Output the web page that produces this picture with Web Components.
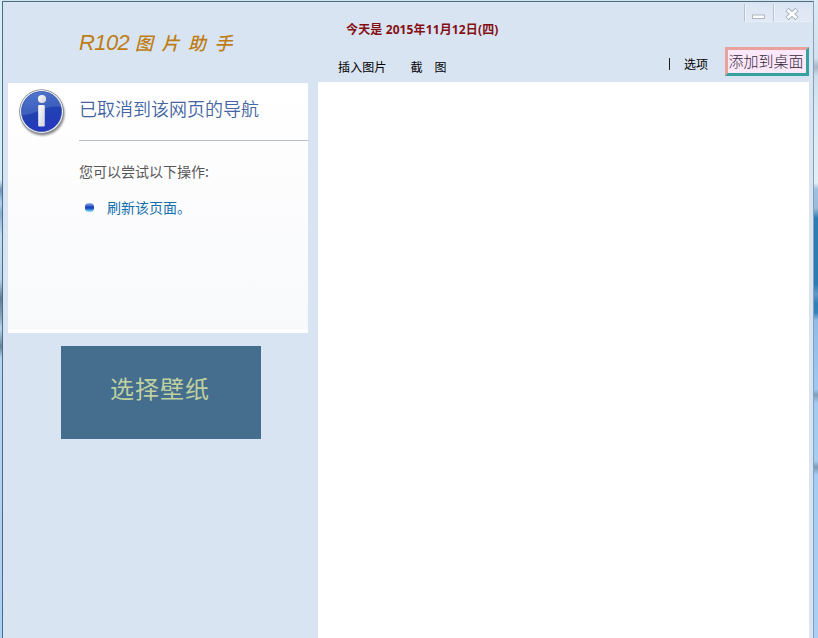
<!DOCTYPE html>
<html lang="zh-CN">
<head>
<meta charset="utf-8">
<title>R102 图片助手</title>
<style>
    html, body { margin: 0; height: 100%; overflow: hidden; }
    body { font-family: "Liberation Sans", "Noto Sans CJK SC", sans-serif; }
</style>
</head>
<body>
<app-window>
    <app-logo slot="side" name="R102">图片助手</app-logo>
    <nav-notice slot="side" heading="已取消到该网页的导航" hint="您可以尝试以下操作:">刷新该页面。</nav-notice>
    <wallpaper-button slot="side">选择壁纸</wallpaper-button>
    <tool-header slot="main"></tool-header>
</app-window>

<script>
const attach = (el, html) => {
    const template = document.createElement('template');
    template.innerHTML = html;
    el.attachShadow({ mode: 'open' }).appendChild(template.content.cloneNode(true));
};

/**
 * 主窗口：桌面边缘、边框、左右两栏
 */
class AppWindow extends HTMLElement {
    constructor() {
        super();
        attach(this, /* html */ `
<style>
    :host {
        display: grid;
        grid-template-columns: 2px 812px 4px;
        width: 818px;
        height: 638px;
        overflow: hidden;
        background: #d3e3ec;
    }
    .edge-left {
        background: linear-gradient(#d9edf5 0, #d5edf7 180px, #6d93bd 190px, #b0d3ef 203px, #87afd1 213px,
            #bfdcf0 235px, #b2d0e8 280px, #5f7d94 298px, #8aa8be 318px, #b7d6ee 328px, #64839b 347px, #b5d5f2 358px, #a9cff3 100%);
    }
    .edge-right {
        background: linear-gradient(#dbeaf3 0, #d1e2ee 58px, #a6b8c6 67px, #cbdfeb 76px, #d8e8f2 110px, #e1eff7 183px,
            #9fc2e2 189px, #9abbd9 208px, #2f7eb3 218px, #2b7cb0 284px, #5c9ac9 294px, #2f7fb7 304px, #3583bb 313px,
            #8ebce7 320px, #9dc9f2 389px, #7f9fba 395px, #a2cbf1 403px, #a4cdf2 461px, #7c9bb6 467px, #a3cdf4 475px, #a9cff4 100%);
    }
    .frame {
        display: grid;
        grid-template-columns: 315px 491px;
        box-sizing: border-box;
        height: 638px;
        margin-top: 1px;
        border: 1px solid #4d6b82;
        border-right-color: #8a9fb7;
        background: #d9e4f3;
    }
    .side { display: flex; flex-direction: column; padding-left: 5px; }
    .main { display: flex; flex-direction: column; }
    .canvas { flex: 1; background: #fff; }
</style>
<div class="edge-left"></div>
<div class="frame">
    <div class="side"><slot name="side"></slot></div>
    <div class="main"><slot name="main"></slot><div class="canvas"></div></div>
</div>
<div class="edge-right"></div>
`);
    }
}
customElements.define('app-window', AppWindow);

// 左上角的手写风格标题
class AppLogo extends HTMLElement {
    constructor() {
        super();
        attach(this, /* html */ `
<style>
    :host {
        display: flex;
        box-sizing: border-box;
        height: 81px;
        padding: 26px 0 0 71px;
        color: #bd7d13;
        line-height: 30px;
        white-space: nowrap;
    }
    .latin {
        width: 56px;
        font: italic 22px/30px "Liberation Sans", sans-serif;
        letter-spacing: -.6px;
    }
    .cn {
        font: italic 500 18px/28px "Noto Sans CJK SC", sans-serif;
        letter-spacing: 8.5px;
    }
</style>
<span class="latin"></span><span class="cn"><slot></slot></span>
`);
        this.shadowRoot.querySelector('.latin').textContent = this.getAttribute('name');
    }
}
customElements.define('app-logo', AppLogo);

// 蓝色信息图标
class InfoIcon extends HTMLElement {
    constructor() {
        super();
        attach(this, /* html */ `
<style>
    :host { display: block; width: 50px; height: 50px; }
    svg { display: block; }
</style>
<svg width="50" height="50" viewBox="0 0 50 50">
    <defs>
        <linearGradient id="ball" x1="0" y1="0" x2="0.3" y2="1">
            <stop offset="0" stop-color="#4068c8"/>
            <stop offset=".5" stop-color="#2145ae"/>
            <stop offset="1" stop-color="#2438bd"/>
        </linearGradient>
        <linearGradient id="stem" x1="0" x2="1" y2="1">
            <stop offset="0" stop-color="#fff"/>
            <stop offset="1" stop-color="#cfd1dc"/>
        </linearGradient>
        <filter id="soft"><feGaussianBlur stdDeviation="1.2"/></filter>
    </defs>
    <circle cx="25.5" cy="26.5" r="22" fill="#555" opacity=".7" filter="url(#soft)"/>
    <circle cx="24.5" cy="24.5" r="22.3" fill="#838995"/>
    <circle cx="24.5" cy="24.5" r="21.5" fill="#f0f2f5"/>
    <circle cx="24.5" cy="24.5" r="20" fill="url(#ball)" stroke="#2845a0" stroke-width=".7"/>
    <path d="M5 26C5 13 14 5 24.5 5S43 12 44 20C29 17 20 28 5 28Z" fill="#8baeea" opacity=".28"/>
    <circle cx="25" cy="12" r="4.1" fill="url(#stem)"/>
    <rect x="21.2" y="18" width="6.6" height="21.4" rx="1" fill="url(#stem)"/>
</svg>
`);
    }
}
customElements.define('info-icon', InfoIcon);

/**
 * 导航取消提示
 */
class NavNotice extends HTMLElement {
    constructor() {
        super();
        attach(this, /* html */ `
<style>
    :host {
        display: grid;
        grid-template-columns: 71px 229px;
        align-content: start;
        width: 300px;
        height: 250px;
        background: linear-gradient(#fff 0, #fdfdfe 80px, #f8f9fb 246px, #fff 247px);
        font-family: "Noto Sans CJK SC", sans-serif;
        white-space: nowrap;
    }
    info-icon { margin: 4px 0 0 9px; }
    h1 {
        box-sizing: border-box;
        height: 58px;
        margin: 0;
        padding-top: 11px;
        border-bottom: 1px solid #b6bbcf;
        color: #4465a2;
        font-size: 18px;
        font-weight: 350;
        line-height: 28px;
    }
    .body { grid-column: 2; padding-top: 19px; font-size: 14px; line-height: 22px; }
    p { margin: 0; color: #575757; }
    .action { display: flex; align-items: center; margin-top: 14px; color: #136ead; }
    .dot {
        width: 9px;
        height: 9px;
        margin: 0 13px 0 6px;
        border-radius: 4px;
        background: linear-gradient(#a6b9ed 0, #3157ca 35%, #1438b8 55%, #49a5e8 80%, #b3dcf2);
    }
</style>
<info-icon></info-icon>
<h1></h1>
<div class="body">
    <p></p>
    <div class="action"><i class="dot"></i><span><slot></slot></span></div>
</div>
`);
        this.shadowRoot.querySelector('h1').textContent = this.getAttribute('heading');
        this.shadowRoot.querySelector('p').textContent = this.getAttribute('hint');
    }
}
customElements.define('nav-notice', NavNotice);

class WallpaperButton extends HTMLElement {
    constructor() {
        super();
        attach(this, /* html */ `
<style>
    :host {
        display: block;
        box-sizing: border-box;
        width: 200px;
        height: 93px;
        margin: 13px 0 0 53px;
        padding: 24px 0 0 49px;
        background: #456d8d;
        color: #bfd1a0;
        font: 24px/36px "Noto Sans CJK SC", sans-serif;
        letter-spacing: 1px;
    }
</style>
<slot></slot>
`);
    }
}
customElements.define('wallpaper-button', WallpaperButton);

// 最小化 / 关闭
class WindowControls extends HTMLElement {
    constructor() {
        super();
        attach(this, /* html */ `
<style>
    :host { display: flex; width: 68px; height: 20px; }
    div {
        box-sizing: border-box;
        height: 18px;
        margin-top: 2px;
        border-left: 1px solid #b3c0d0;
        border-bottom: 1px solid #e6eef8;
        background: linear-gradient(#dce6f3, #e1e9f5);
        box-shadow: inset 1px 0 #f0f5fb;
    }
    .min { width: 29px; }
    .close { width: 39px; }
    svg { display: block; }
</style>
<div class="min"><svg width="28" height="18"><rect x="7.5" y="11" width="12" height="3.5" fill="#fff" stroke="#b0b6bf"/></svg></div>
<div class="close"><svg width="38" height="18">
    <path d="M13 5.5L23 14.5M23 5.5L13 14.5" stroke="#a9b0ba" stroke-width="4.6"/>
    <path d="M13.5 6L22.5 14M22.5 6L13.5 14" stroke="#fff" stroke-width="2.8"/>
</svg></div>
`);
    }
}
customElements.define('window-controls', WindowControls);

/**
 * 右侧顶部：日期、菜单、窗口按钮
 */
class ToolHeader extends HTMLElement {
    constructor() {
        super();
        attach(this, /* html */ `
<style>
    :host {
        display: flex;
        justify-content: space-between;
        height: 80px;
        color: #000;
        font: 12px/18px "Noto Sans CJK SC", sans-serif;
        white-space: nowrap;
    }
    .left { padding: 19px 0 0 20px; }
    .date {
        padding-left: 8px;
        color: #841014;
        font: bold 12px/18px "Open Sans", "Noto Sans CJK SC", sans-serif;
        letter-spacing: .13px;
    }
    .menu { display: flex; margin-top: 19px; letter-spacing: .15px; }
    .menu .shot { margin-left: 24px; word-spacing: 9px; }
    .right { display: flex; flex-direction: column; align-items: flex-end; }
    window-controls { margin-right: -3px; }
    .tools { display: flex; margin-top: 25px; }
    .bar { width: 1px; height: 12px; margin: 11px 14px 0 0; background: #222; }
    .options { margin: 8px 17px 0 0; }
    .desktop {
        box-sizing: border-box;
        width: 84px;
        height: 29px;
        padding-right: 2px;
        border: 3px solid;
        border-color: #eaa09c #36a29f #36a29f #eaa09c;
        background: #fbe9fa;
        color: #35273c;
        font: 300 15px/22px "Noto Sans CJK SC", sans-serif;
        text-align: center;
    }
</style>
<div class="left">
    <div class="date">今天是 2015年11月12日(四)</div>
    <div class="menu"><span>插入图片</span><span class="shot">截 图</span></div>
</div>
<div class="right">
    <window-controls></window-controls>
    <div class="tools">
        <i class="bar"></i>
        <span class="options">选项</span>
        <div class="desktop">添加到桌面</div>
    </div>
</div>
`);
    }
}
customElements.define('tool-header', ToolHeader);
</script>
</body>
</html>
